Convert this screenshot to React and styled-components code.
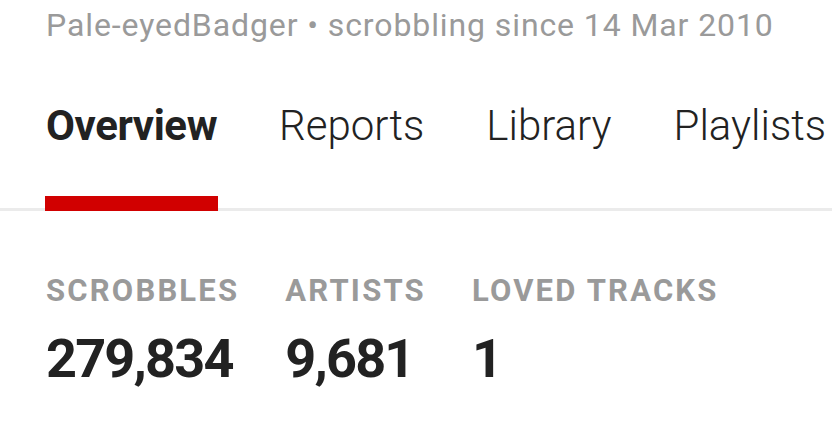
import React from 'react';
import styled, { createGlobalStyle } from 'styled-components';

const tabs = ['Overview', 'Reports', 'Library', 'Playlists'];

const stats = [
  { label: 'Scrobbles', value: '279,834' },
  { label: 'Artists', value: '9,681' },
  { label: 'Loved Tracks', value: '1' },
];

export default function App() {
  return (
    <>
      <GlobalStyle />
      <Page>
        <Meta>Pale-eyedBadger • scrobbling since 14 Mar 2010</Meta>
        <TabBar>
          {tabs.map((tab, i) => (
            <Tab key={tab} active={i === 0}>
              {tab}
            </Tab>
          ))}
        </TabBar>
        <Stats>
          {stats.map((s) => (
            <Stat key={s.label}>
              <StatLabel>{s.label}</StatLabel>
              <StatValue>{s.value}</StatValue>
            </Stat>
          ))}
        </Stats>
      </Page>
    </>
  );
}

const GlobalStyle = createGlobalStyle`
  html, body {
    margin: 0;
    background: #fff;
  }
  body {
    font-family: Roboto, "Liberation Sans", sans-serif;
  }
`;

const Page = styled.div`
  width: 832px;
  height: 425px;
  overflow: hidden;
`;

const Meta = styled.div`
  height: 50px;
  line-height: 50px;
  padding-left: 46px;
  font-size: 32px;
  letter-spacing: 0.9px;
  color: #9a9a9a;
  white-space: nowrap;
`;

const TabBar = styled.nav`
  display: flex;
  gap: 62px;
  padding-left: 46px;
  border-bottom: 3px solid #ebebeb;
  white-space: nowrap;
`;

const Tab = styled.div`
  position: relative;
  padding: 51px 0 57px;
  font-size: 42px;
  line-height: 1.2;
  font-weight: ${(p) => (p.active ? 700 : 300)};
  letter-spacing: ${(p) => (p.active ? '-0.4px' : '0')};
  color: #222;

  &::after {
    content: '';
    display: ${(p) => (p.active ? 'block' : 'none')};
    position: absolute;
    left: -1px;
    right: -1px;
    bottom: -3px;
    height: 15px;
    background: #d10000;
  }
`;

const Stats = styled.div`
  display: flex;
  gap: 46px;
  padding: 61px 0 0 46px;
`;

const Stat = styled.div`
  display: flex;
  flex-direction: column;
  gap: 19px;
`;

const StatLabel = styled.div`
  font-size: 31px;
  line-height: 1.2;
  font-weight: 700;
  letter-spacing: 2.2px;
  text-transform: uppercase;
  color: #9a9a9a;
  white-space: nowrap;
`;

const StatValue = styled.div`
  font-size: 54px;
  line-height: 1.1;
  font-weight: 700;
  letter-spacing: -1.8px;
  color: #222;
`;
